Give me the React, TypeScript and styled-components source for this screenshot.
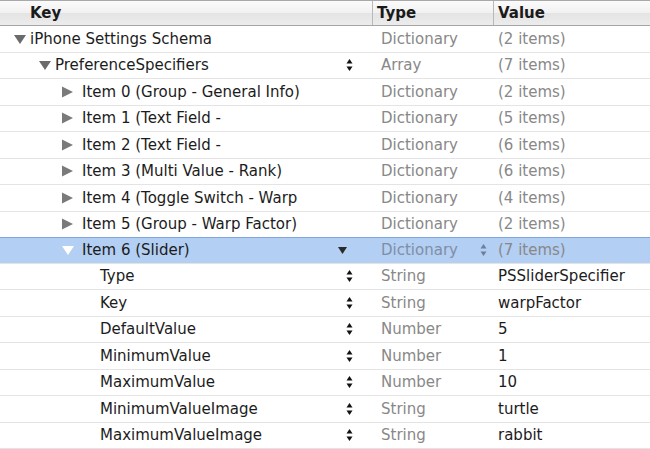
import React from "react";
import styled, { createGlobalStyle } from "styled-components";

const GlobalStyle = createGlobalStyle`
	html, body {
		margin: 0;
		padding: 0;
		background: #ffffff;
	}
	body {
		font-family: "DejaVu Sans", "Liberation Sans", sans-serif;
		font-size: 15px;
		color: #1c1c1c;
	}
`;

interface RowData {
	key: string;
	level: number;
	disclosure?: "open" | "closed";
	type: string;
	value: string;
	valueDim?: boolean;
	stepper?: boolean;
	selected?: boolean;
}

const rows: RowData[] = [
	{ key: "iPhone Settings Schema", level: 0, disclosure: "open", type: "Dictionary", value: "(2 items)", valueDim: true },
	{ key: "PreferenceSpecifiers", level: 1, disclosure: "open", type: "Array", value: "(7 items)", valueDim: true, stepper: true },
	{ key: "Item 0 (Group - General Info)", level: 2, disclosure: "closed", type: "Dictionary", value: "(2 items)", valueDim: true },
	{ key: "Item 1 (Text Field -", level: 2, disclosure: "closed", type: "Dictionary", value: "(5 items)", valueDim: true },
	{ key: "Item 2 (Text Field -", level: 2, disclosure: "closed", type: "Dictionary", value: "(6 items)", valueDim: true },
	{ key: "Item 3 (Multi Value - Rank)", level: 2, disclosure: "closed", type: "Dictionary", value: "(6 items)", valueDim: true },
	{ key: "Item 4 (Toggle Switch - Warp", level: 2, disclosure: "closed", type: "Dictionary", value: "(4 items)", valueDim: true },
	{ key: "Item 5 (Group - Warp Factor)", level: 2, disclosure: "closed", type: "Dictionary", value: "(2 items)", valueDim: true },
	{ key: "Item 6 (Slider)", level: 2, disclosure: "open", type: "Dictionary", value: "(7 items)", valueDim: true, selected: true },
	{ key: "Type", level: 3, type: "String", value: "PSSliderSpecifier", stepper: true },
	{ key: "Key", level: 3, type: "String", value: "warpFactor", stepper: true },
	{ key: "DefaultValue", level: 3, type: "Number", value: "5", stepper: true },
	{ key: "MinimumValue", level: 3, type: "Number", value: "1", stepper: true },
	{ key: "MaximumValue", level: 3, type: "Number", value: "10", stepper: true },
	{ key: "MinimumValueImage", level: 3, type: "String", value: "turtle", stepper: true },
	{ key: "MaximumValueImage", level: 3, type: "String", value: "rabbit", stepper: true },
];

// left edge of the disclosure triangle (or text, for leaves) per depth
const indents = [14, 39, 62, 100];
// space between triangle and text per depth
const gaps = [4, 4, 8, 0];

const Table = styled.div`
	width: 650px;
	height: 449px;
	overflow: hidden;
	display: flex;
	flex-direction: column;
`;

const Header = styled.div`
	display: grid;
	grid-template-columns: 372px 121px 1fr;
	height: 24px;
	border-top: 1px solid #a9a9a9;
	border-bottom: 1px solid #a6a6a6;
	background: linear-gradient(#fbfbfb, #f1f1f1 50%, #e4e4e4 51%, #ececec);
	box-shadow: 0 1px 0 #f4f4f4;
	font-weight: bold;
	color: #1a1a1a;
`;

const HeaderCell = styled.div<{ $pad: number; $divider?: boolean }>`
	display: flex;
	align-items: center;
	padding-left: ${(p) => p.$pad}px;
	border-left: ${(p) => (p.$divider ? "1px solid #b9b9b9" : "none")};
`;

const Row = styled.div<{ $selected?: boolean }>`
	display: grid;
	grid-template-columns: 372px 121px 1fr;
	height: 26.5px;
	box-sizing: border-box;
	border-bottom: 1px solid #e4e4e4;
	background: ${(p) => (p.$selected ? "#b3cff3" : "#ffffff")};
	border-top: ${(p) => (p.$selected ? "1px solid #7ea5dd" : "none")};
	margin-top: ${(p) => (p.$selected ? "-1px" : "0")};
`;

const KeyCell = styled.div<{ $indent: number }>`
	display: flex;
	align-items: center;
	padding-left: ${(p) => p.$indent}px;
	padding-right: 19px;
	white-space: nowrap;
	overflow: hidden;
`;

const KeyText = styled.span`
	color: #1c1c1c;
`;

const TypeCell = styled.div<{ $selected?: boolean }>`
	display: flex;
	align-items: center;
	padding-left: 9px;
	padding-right: 6px;
	color: ${(p) => (p.$selected ? "#7f8ea6" : "#888888")};
`;

const ValueCell = styled.div<{ $dim?: boolean }>`
	display: flex;
	align-items: center;
	padding-left: 5px;
	color: ${(p) => (p.$dim ? "#888888" : "#1c1c1c")};
	white-space: nowrap;
`;

const Spacer = styled.span`
	flex: 1;
`;

const Disclosure = ({ open, light, gap }: { open: boolean; light?: boolean; gap: number }) => (
	<svg width="12" height="12" viewBox="0 0 12 12" style={{ marginRight: gap, flexShrink: 0 }}>
		{open ? (
			<polygon points="0,2 12,2 6,11" fill={light ? "#ffffff" : "#6b6b6b"} />
		) : (
			<polygon points="0,0.5 11,6 0,11.5" fill="#7a7a7a" />
		)}
	</svg>
);

const Stepper = ({ color = "#111" }: { color?: string }) => (
	<svg width="7" height="14" viewBox="0 0 7 14" style={{ flexShrink: 0 }}>
		<polygon points="3.5,1 6.5,5.5 0.5,5.5" fill={color} />
		<polygon points="0.5,8.5 6.5,8.5 3.5,13" fill={color} />
	</svg>
);

const SmallArrow = () => (
	<svg width="9" height="8" viewBox="0 0 9 8" style={{ marginRight: 6, flexShrink: 0 }}>
		<polygon points="0,1 9,1 4.5,8" fill="#2a2a2a" />
	</svg>
);

export default function App() {
	return (
		<>
			<GlobalStyle />
			<Table>
				<Header>
					<HeaderCell $pad={30}>Key</HeaderCell>
					<HeaderCell $pad={4} $divider>
						Type
					</HeaderCell>
					<HeaderCell $pad={4} $divider>
						Value
					</HeaderCell>
				</Header>
				{rows.map((r) => (
					<Row key={r.key} $selected={r.selected}>
						<KeyCell $indent={indents[r.level]}>
							{r.disclosure && (
								<Disclosure
									open={r.disclosure === "open"}
									light={r.selected}
									gap={r.disclosure === "closed" ? 8 : gaps[r.level]}
								/>
							)}
							<KeyText>{r.key}</KeyText>
							<Spacer />
							{r.stepper && <Stepper />}
							{r.selected && <SmallArrow />}
						</KeyCell>
						<TypeCell $selected={r.selected}>
							{r.type}
							<Spacer />
							{r.selected && <Stepper color="#6c7f9c" />}
						</TypeCell>
						<ValueCell $dim={r.valueDim}>{r.value}</ValueCell>
					</Row>
				))}
			</Table>
		</>
	);
}
